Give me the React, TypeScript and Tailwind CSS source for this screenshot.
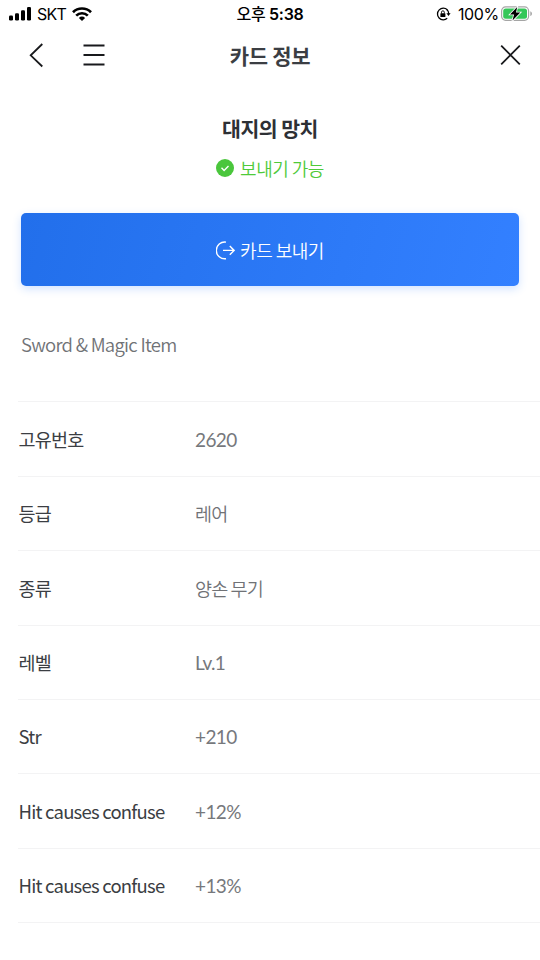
const details = [
  { label: "고유번호", value: "2620" },
  { label: "등급", value: "레어" },
  { label: "종류", value: "양손 무기" },
  { label: "레벨", value: "Lv.1" },
  { label: "Str", value: "+210" },
  { label: "Hit causes confuse", value: "+12%" },
  { label: "Hit causes confuse", value: "+13%" },
];

const hangul = /[가-힣]/;

function StatusBar() {
  return (
    <div className="grid h-7 grid-cols-[1fr_auto_1fr] items-center pl-2 pr-[7px] font-['Inter','Noto_Sans_CJK_KR',sans-serif] text-black">
      <div className="flex items-center">
        <svg width="24" height="14" viewBox="0 0 24 14" fill="currentColor">
          <rect x="1" y="8.5" width="4" height="5" rx="1.2" />
          <rect x="7" y="6.3" width="4" height="7.2" rx="1.2" />
          <rect x="13" y="3.2" width="4" height="10.3" rx="1.2" />
          <rect x="19" y="0" width="4" height="13.5" rx="1.2" />
        </svg>
        <span className="ml-[5px] w-[29px] text-[16px] leading-7 tracking-[-0.7px]">SKT</span>
        <svg className="ml-[6px]" width="20" height="14" viewBox="0 0 20 14" fill="none" stroke="currentColor" strokeWidth="2.7">
          <path d="M1 5.2a12.8 12.8 0 0 1 18 0" />
          <path d="M4.2 8.6a8.3 8.3 0 0 1 11.6 0" />
          <path d="M10 14l-3.1-3.1a4.4 4.4 0 0 1 6.2 0z" fill="currentColor" stroke="none" />
        </svg>
      </div>
      <span className="pr-px text-[16px] font-semibold leading-7 tracking-[-0.3px]">
        <span className="font-medium">오후</span> 5:38
      </span>
      <div className="flex items-center justify-end">
        <svg width="15" height="14" viewBox="0 0 15 14" fill="none" stroke="currentColor" strokeWidth="1.3">
          <path d="M11.3 2.8A5.8 5.8 0 1 0 11.2 11.3" />
          <path d="M10.8 2.4A5.8 5.8 0 0 1 12.8 7" />
          <path d="M10.4 6.2h4.2L12.5 9z" fill="currentColor" stroke="none" />
          <rect x="4.4" y="6.3" width="5" height="3.8" rx="0.5" fill="currentColor" stroke="none" />
          <path d="M5.5 6.5V5.2a1.4 1.4 0 0 1 2.8 0v1.3" strokeWidth="0.9" />
        </svg>
        <span className="ml-[7px] w-[39px] text-[16px] leading-7 tracking-[-0.4px]">100%</span>
        <svg className="ml-1" width="32" height="16" viewBox="0 0 32 16">
          <rect x="0.6" y="0.9" width="27" height="13.4" rx="4" fill="none" stroke="#a5a5a5" strokeWidth="1.2" />
          <rect x="2.2" y="2.5" width="23.8" height="10.2" rx="2.5" fill="#35c759" />
          <path d="M29.3 5.2c2.2.7 2.2 4.1 0 4.8z" fill="#a5a5a5" />
          <path d="M16.2 1 9 8.5h4.1L11.5 14.6 19.3 6.6h-4.3z" fill="#000" stroke="#fff" strokeWidth="1.6" paintOrder="stroke" />
        </svg>
      </div>
    </div>
  );
}

function Header() {
  return (
    <header className="grid h-[54px] grid-cols-[1fr_auto_1fr] items-center px-[18px] text-[#18191c]">
      <div className="flex items-center gap-[29px]">
        <button type="button" aria-label="뒤로">
          <svg width="36" height="26" viewBox="0 0 36 26" fill="none" stroke="currentColor" strokeWidth="1.8">
            <path d="M24.3 2 12.7 13.3 24.3 24.5" />
          </svg>
        </button>
        <button type="button" aria-label="메뉴">
          <svg width="22" height="26" viewBox="0 0 22 26" fill="none" stroke="currentColor" strokeWidth="1.9">
            <path d="M.5 3.5h21M.5 13h21M.5 22.5h21" />
          </svg>
        </button>
      </div>
      <h1 className="pb-px text-[21px] font-bold leading-7 tracking-[-0.3px] text-[#3b3e43]">카드 정보</h1>
      <button type="button" aria-label="닫기" className="justify-self-end">
        <svg width="24" height="24" viewBox="0 0 24 24" fill="none" stroke="currentColor" strokeWidth="1.8">
          <path d="M3.2 2.7 21.8 21.3M21.8 2.7 3.2 21.3" />
        </svg>
      </button>
    </header>
  );
}

export default function App() {
  return (
    <div className="h-[960px] w-[540px] overflow-hidden bg-white font-['Noto_Sans_CJK_KR',sans-serif]">
      <StatusBar />
      <Header />
      <section className="flex flex-col items-center pt-8">
        <h2 className="text-[20.5px] font-bold leading-7 tracking-[-0.5px] text-[#2d3035]">대지의 망치</h2>
        <p className="mt-3 flex h-7 items-center gap-[5px] text-[18px] font-[350] tracking-[-0.5px] text-[#4fca3a]">
          <svg width="19" height="19" viewBox="0 0 19 19" fill="none">
            <circle cx="9" cy="9" r="9" fill="#4ac63c" />
            <path d="m5.5 8.8 2.6 2.6 4.4-4.3" stroke="#fff" strokeWidth="1.4" />
          </svg>
          보내기 가능
        </p>
      </section>
      <button
        type="button"
        className="mx-[21px] mt-[31.4px] flex h-[73px] w-[498px] items-center justify-center gap-[5px] rounded-[5px] bg-linear-[105deg,#226feb,#3380ff] pt-[2px] text-[18px] font-[350] tracking-[-0.5px] text-white shadow-[0_3px_9px_rgba(51,128,255,0.22)]"
      >
        <svg width="19" height="19" viewBox="0 0 19 19" fill="none" stroke="currentColor" strokeWidth="1.4">
          <path d="M10 1.1A8.4 8.4 0 1 0 10 17.7" />
          <path d="M7 9.4h11M13.8 5l4.3 4.4-4.3 4.4" />
        </svg>
        카드 보내기
      </button>
      <p className="mt-[43.6px] pl-[21px] text-[18.5px] font-[350] leading-7 tracking-[-0.72px] text-[#707276]">Sword &amp; Magic Item</p>
      <dl className="ml-[18px] mt-[43.5px] border-t border-[#f3f3f4]">
        {details.map(({ label, value }, index) => (
          <div key={index} className="flex h-[74.35px] items-center border-b border-[#f3f3f4] pl-[0.5px] pt-[1.2px] text-[18.5px]">
            <dt className="w-[176.5px] tracking-[-0.78px] text-[#3b3e43]">{label}</dt>
            {hangul.test(value) ? (
              <dd className="font-[350] tracking-[-0.85px] text-[#707276]">{value}</dd>
            ) : (
              <dd className="pt-px font-['Lato',sans-serif] text-[19px] tracking-[-0.6px] text-[#76787c]">{value}</dd>
            )}
          </div>
        ))}
      </dl>
    </div>
  );
}
